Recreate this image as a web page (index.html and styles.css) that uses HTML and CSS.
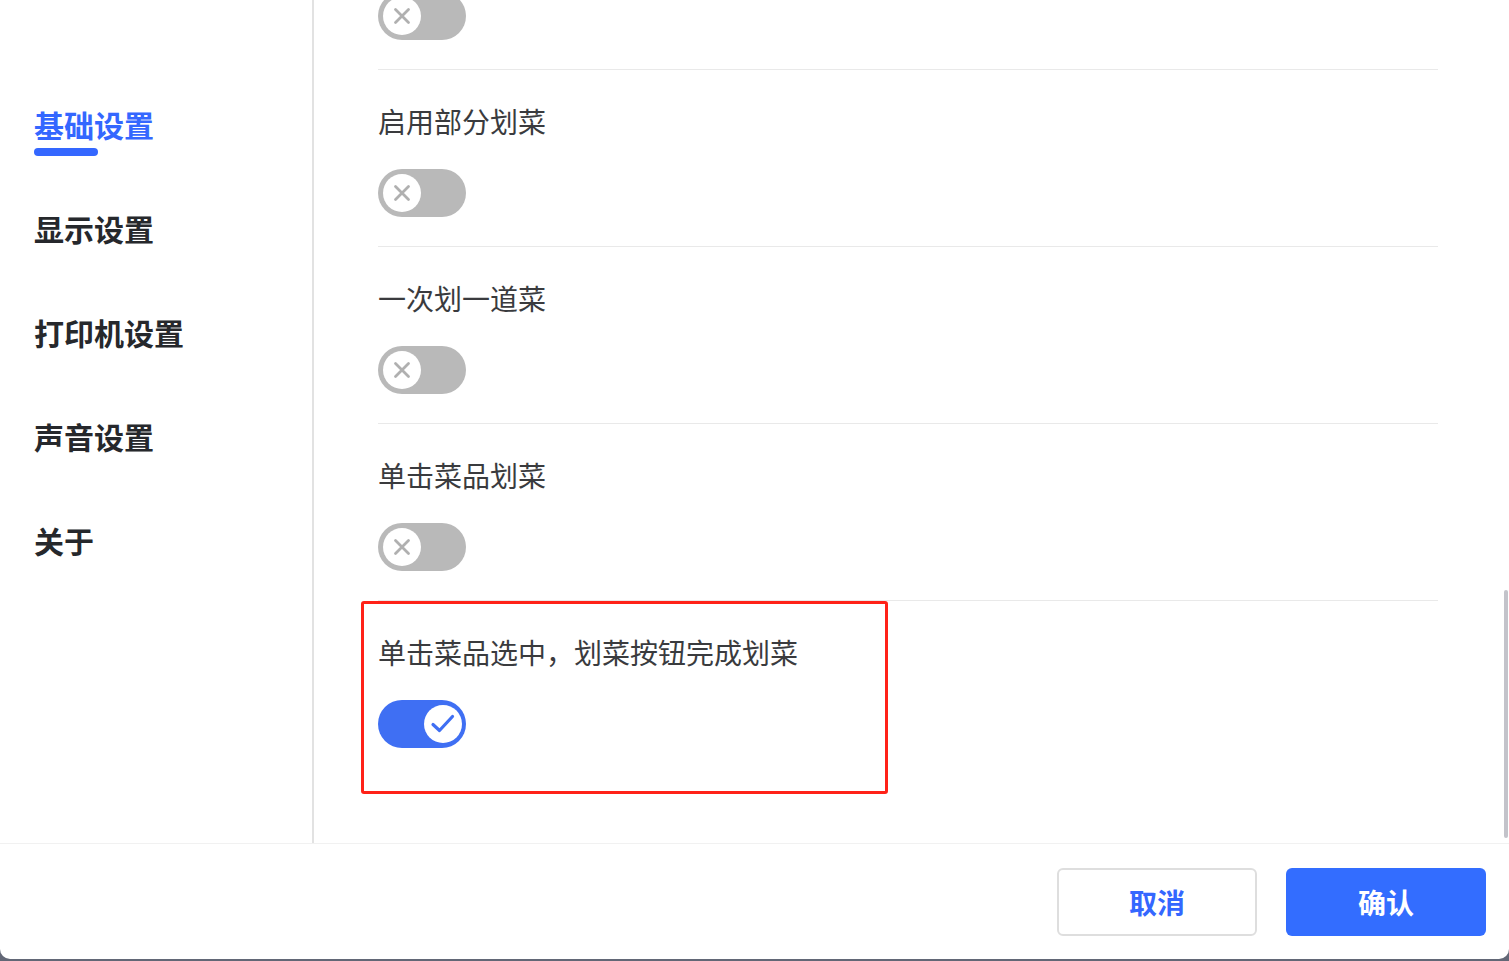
FILE: index.html
```html
<!DOCTYPE html>
<html lang="zh-CN">
<head>
<meta charset="utf-8">
<title>设置</title>
<link rel="stylesheet" href="styles.css">
</head>
<body>
<div class="dialog">
  <div class="main">
    <nav class="sidebar">
      <div class="nav-item active">基础设置</div>
      <div class="nav-item">显示设置</div>
      <div class="nav-item">打印机设置</div>
      <div class="nav-item">声音设置</div>
      <div class="nav-item">关于</div>
    </nav>
    <section class="content">
      <div class="list">
        <div class="row">
          <div class="label" aria-hidden="true"></div>
          <div class="switch off"><span class="knob"><svg viewBox="0 0 20 20" width="20" height="20"><path d="M3.5 3.5L16.5 16.5M16.5 3.5L3.5 16.5" stroke="#b0b0b0" stroke-width="2.8" stroke-linecap="round" fill="none"/></svg></span></div>
        </div>
        <div class="row">
          <div class="label">启用部分划菜</div>
          <div class="switch off"><span class="knob"><svg viewBox="0 0 20 20" width="20" height="20"><path d="M3.5 3.5L16.5 16.5M16.5 3.5L3.5 16.5" stroke="#b0b0b0" stroke-width="2.8" stroke-linecap="round" fill="none"/></svg></span></div>
        </div>
        <div class="row">
          <div class="label">一次划一道菜</div>
          <div class="switch off"><span class="knob"><svg viewBox="0 0 20 20" width="20" height="20"><path d="M3.5 3.5L16.5 16.5M16.5 3.5L3.5 16.5" stroke="#b0b0b0" stroke-width="2.8" stroke-linecap="round" fill="none"/></svg></span></div>
        </div>
        <div class="row">
          <div class="label">单击菜品划菜</div>
          <div class="switch off"><span class="knob"><svg viewBox="0 0 20 20" width="20" height="20"><path d="M3.5 3.5L16.5 16.5M16.5 3.5L3.5 16.5" stroke="#b0b0b0" stroke-width="2.8" stroke-linecap="round" fill="none"/></svg></span></div>
        </div>
        <div class="row last">
          <div class="highlight"></div>
          <div class="label">单击菜品选中，划菜按钮完成划菜</div>
          <div class="switch on"><span class="knob"><svg viewBox="0 0 28 28" width="28" height="28"><path d="M4 14.5L10.5 20.5L23.5 6.5" stroke="#3f6ff3" stroke-width="3.2" stroke-linecap="round" stroke-linejoin="round" fill="none"/></svg></span></div>
        </div>
      </div>
      <div class="scrollbar"></div>
    </section>
  </div>
  <footer class="footer">
    <button class="btn btn-cancel">取消</button>
    <button class="btn btn-ok">确认</button>
  </footer>
</div>
</body>
</html>
```

FILE: styles.css
```css
* { box-sizing: border-box; }
html, body { margin: 0; padding: 0; }
body {
  background: #626776;
  font-family: "Noto Sans CJK SC", "Noto Sans", sans-serif;
  height: 961px;
  overflow: hidden;
}
.dialog {
  width: 1509px;
  height: 959px;
  background: #ffffff;
  border-radius: 0 0 10px 10px;
  display: flex;
  flex-direction: column;
  overflow: hidden;
}
.main {
  display: flex;
  height: 843px;
  flex: none;
}
.sidebar {
  width: 314px;
  flex: none;
  border-right: 2px solid #e2e2e2;
  padding: 104px 0 0 34px;
}
.nav-item {
  height: 104px;
  font-size: 30px;
  line-height: 40px;
  font-weight: 700;
  color: #26282c;
}
.nav-item.active { color: #3467ff; }
.nav-item.active::after {
  content: "";
  display: block;
  width: 64px;
  height: 8px;
  margin-top: 4px;
  border-radius: 4px;
  background: #3467ff;
}
.content {
  flex: 1;
  position: relative;
  overflow: hidden;
  padding: 0 71px 0 64px;
}
.list { margin-top: -107px; }
.row {
  position: relative;
  padding: 31px 0 29px;
  border-bottom: 1px solid #e9e9e9;
}
.row.last { border-bottom: none; }
.label {
  font-size: 28px;
  line-height: 40px;
  height: 40px;
  color: #3a3b3e;
  margin-bottom: 28px;
}
.switch {
  position: relative;
  width: 88px;
  height: 48px;
  border-radius: 24px;
  display: flex;
  align-items: center;
  padding: 0 5px;
}
.switch.off { background: #b9b9b9; }
.switch.on { background: #3f6ff3; justify-content: flex-end; padding: 0 4px; }
.knob {
  width: 38px;
  height: 38px;
  border-radius: 50%;
  background: #ffffff;
  display: flex;
  align-items: center;
  justify-content: center;
}
.highlight {
  position: absolute;
  left: -17px;
  top: 0;
  width: 527px;
  height: 193px;
  border: 3px solid #ff2218;
  border-radius: 3px;
  pointer-events: none;
}
.scrollbar {
  position: absolute;
  right: 1px;
  top: 590px;
  width: 4px;
  height: 248px;
  border-radius: 2px;
  background: #c3c3ca;
}
.footer {
  flex: 1;
  border-top: 1px solid #f1f1f1;
  display: flex;
  justify-content: flex-end;
  align-items: flex-start;
  gap: 29px;
  padding: 24px 23px 0 0;
}
.btn {
  width: 200px;
  height: 68px;
  border-radius: 6px;
  font-family: "Noto Sans CJK SC", "Noto Sans", sans-serif;
  font-size: 28px;
  font-weight: 700;
  cursor: pointer;
}
.btn-cancel {
  background: #ffffff;
  border: 2px solid #dedede;
  color: #3467ff;
}
.btn-ok {
  background: #336dff;
  border: none;
  color: #ffffff;
}
```
